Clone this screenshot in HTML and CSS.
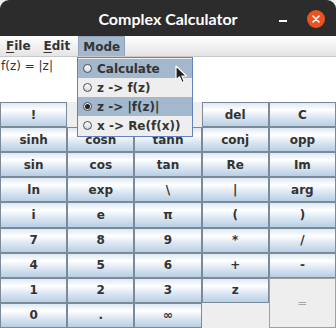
FILE: index.html
```html
<!DOCTYPE html>
<html lang="en">
<head>
  <meta charset="UTF-8" />
  <title>Complex Calculator</title>
  <link rel="stylesheet" href="styles.css">
</head>
<body>
  <div class="window">
    <header class="titlebar">
      <span></span>
      <span class="title">Complex Calculator</span>
      <div class="controls">
        <span class="min"></span>
        <span class="close">
          <svg width="18" height="18" viewBox="0 0 18 18">
            <path d="M6 6 L12 12 M12 6 L6 12" stroke="#fff" stroke-width="1.6" stroke-linecap="round" />
          </svg>
        </span>
      </div>
    </header>

    <nav class="menubar">
      <span class="menu"><u>F</u>ile</span>
      <span class="menu"><u>E</u>dit</span>
      <span class="menu open">Mode</span>
    </nav>

    <div class="display">f(z) = |z|</div>

    <div class="keypad">
      <button class="key">!</button>
      <div class="blank"></div>
      <div class="blank"></div>
      <button class="key">del</button>
      <button class="key">C</button>

      <button class="key">sinh</button>
      <button class="key">cosh</button>
      <button class="key">tanh</button>
      <button class="key">conj</button>
      <button class="key">opp</button>

      <button class="key">sin</button>
      <button class="key">cos</button>
      <button class="key">tan</button>
      <button class="key">Re</button>
      <button class="key">Im</button>

      <button class="key">ln</button>
      <button class="key">exp</button>
      <button class="key">\</button>
      <button class="key">|</button>
      <button class="key">arg</button>

      <button class="key">i</button>
      <button class="key">e</button>
      <button class="key">π</button>
      <button class="key">(</button>
      <button class="key">)</button>

      <button class="key">7</button>
      <button class="key">8</button>
      <button class="key">9</button>
      <button class="key">*</button>
      <button class="key">/</button>

      <button class="key">4</button>
      <button class="key">5</button>
      <button class="key">6</button>
      <button class="key">+</button>
      <button class="key">-</button>

      <button class="key">1</button>
      <button class="key">2</button>
      <button class="key">3</button>
      <button class="key">z</button>
      <button class="key eq" disabled>=</button>

      <button class="key">0</button>
      <button class="key">.</button>
      <button class="key">∞</button>
      <div class="blank"></div>
    </div>

    <!-- menu Mode ouvert -->
    <ul class="popup">
      <li class="item hover"><span class="radio"></span>Calculate</li>
      <li class="item"><span class="radio"></span>z -&gt; f(z)</li>
      <li class="item hover"><span class="radio checked"></span>z -&gt; |f(z)|</li>
      <li class="item"><span class="radio"></span>x -&gt; Re(f(x))</li>
    </ul>

    <svg class="cursor" width="13" height="19" viewBox="0 0 13 19">
      <path d="M1 1 L1 15 L4.5 11.8 L7 17.5 L9.3 16.5 L6.9 11 L11.5 11 Z" fill="#222" stroke="#fff" stroke-width="1.2" stroke-linejoin="round" />
    </svg>
  </div>
</body>
</html>
```

FILE: styles.css
```css
* {
  margin: 0;
  padding: 0;
  box-sizing: border-box;
}

body {
  background: #fff;
  font-family: "DejaVu Sans", sans-serif;
  font-size: 12px;
  color: #333;
  width: 336px;
  height: 328px;
  overflow: hidden;
}

.window {
  position: relative;
  display: flex;
  flex-direction: column;
  height: 328px;
  background: #eeeeee;
}

/* barre de titre */
.titlebar {
  height: 36px;
  background: #2c2c2c;
  border-radius: 9px 9px 0 0;
  display: grid;
  grid-template-columns: 1fr auto 1fr;
  align-items: center;
}

.title {
  font-family: Lato, sans-serif;
  font-weight: bold;
  font-size: 16px;
  color: #fff;
}

.controls {
  display: flex;
  justify-content: flex-end;
  align-items: center;
  gap: 20px;
  padding-right: 11px;
}

.min {
  width: 8px;
  height: 2px;
  background: #fff;
  margin-top: 5px;
}

.close {
  width: 18px;
  height: 18px;
  border-radius: 50%;
  background: #e95420;
  display: flex;
  margin-top: 2px;
}

/* menus */
.menubar {
  height: 21px;
  display: flex;
  align-items: stretch;
  gap: 3px;
  padding-left: 1px;
  background: linear-gradient(#ffffff, #e4e4e4);
  border-bottom: 1px solid #c8c8c8;
}

.menu {
  font-weight: bold;
  padding: 0 4px;
  display: flex;
  align-items: center;
  border: 1px solid transparent;
}

.menu u {
  text-decoration-thickness: 1px;
  text-underline-offset: 2px;
}

.menu.open {
  background: #a3b8cc;
  border-color: #8ea3b9;
  border-bottom: none;
}

.display {
  height: 45px;
  background: #fff;
  line-height: 16px;
  padding-left: 1px;
  padding-top: 1px;
}

/* clavier */
.keypad {
  flex: 1;
  display: grid;
  grid-template-columns: repeat(5, 1fr);
  grid-template-rows: repeat(9, 1fr);
}

.key {
  font-family: "DejaVu Sans", sans-serif;
  font-weight: bold;
  font-size: 12px;
  color: #333;
  border: 1px solid #7a8a99;
  background: linear-gradient(#dde8f3 0%, #ffffff 30%, #dde8f3 60%, #b8cfe5 100%);
}

.key.eq {
  grid-column: 5;
  grid-row: 8 / span 2;
  background: #eeeeee;
  border-color: #a0a0a0;
  color: #a8a8a8;
  font-weight: normal;
}

.blank {
  background: #eeeeee;
}

/* popup */
.popup {
  position: absolute;
  left: 77px;
  top: 57px;
  width: 116px;
  list-style: none;
  background: #eeeeee;
  border: 1px solid #6382bf;
  padding: 1px 0;
}

.item {
  height: 19px;
  display: flex;
  align-items: center;
  gap: 5px;
  padding-left: 5px;
  font-weight: bold;
  white-space: nowrap;
}

.item.hover {
  background: #a3b8cc;
}

.radio {
  width: 9px;
  height: 9px;
  border-radius: 50%;
  border: 1px solid #4d4d4d;
  background: linear-gradient(#ffffff, #c9d6e3);
  display: flex;
  align-items: center;
  justify-content: center;
}

.radio.checked::after {
  content: "";
  width: 5px;
  height: 5px;
  border-radius: 50%;
  background: #222;
}

.cursor {
  position: absolute;
  left: 175px;
  top: 65px;
}
```
